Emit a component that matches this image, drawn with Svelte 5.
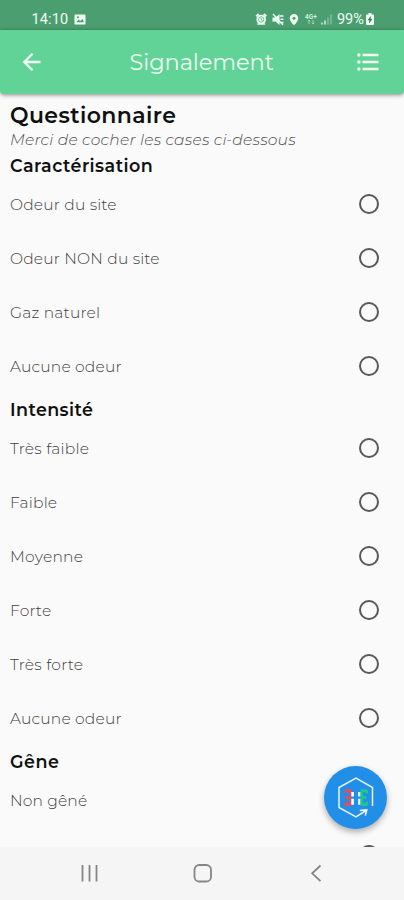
<script>
  const sections = [
    {
      title: 'Caractérisation', width: 143,
      options: [['Odeur du site', 106.5], ['Odeur NON du site', 149.5], ['Gaz naturel', 90], ['Aucune odeur', 111.5]]
    },
    {
      title: 'Intensité', width: 83,
      options: [['Très faible', 79], ['Faible', 47], ['Moyenne', 73], ['Forte', 41], ['Très forte', 73], ['Aucune odeur', 111.5]]
    },
    { title: 'Gêne', width: 49, options: [['Non gêné', 77], ['', 0]] }
  ];

  function track(node, width) {
    if (!width) return;
    const natural = node.getBoundingClientRect().width;
    node.style.letterSpacing = `${(width + 0.3 - natural) / node.textContent.length}px`;
  }
</script>

<div class="screen">
  <div class="status">
    <span class="time"><span use:track={36.5}>14:10</span></span>
    <svg class="photo" width="12" height="11" viewBox="0 0 12 12" preserveAspectRatio="none"><rect x=".5" y=".5" width="11" height="11" rx="1" fill="#effff4" /><path d="M2.3 9 4.5 6l1.7 1.7L8.5 5.500 10 9z" fill="#4b9e70" /><circle cx="4" cy="3.500" r="1" fill="#4b9e70" /></svg>
    <div class="right">
      <svg class="icons" width="82" height="18" viewBox="0 0 82 18" fill="none" stroke="#effff4">
        <path d="M1.200 6.300 3.700 4M11.300 6.300 8.800 4" stroke-width="2" />
        <circle cx="6.200" cy="9.500" r="4.800" fill="#effff4" stroke="none" />
        <circle cx="6.200" cy="9.500" r="2.700" stroke="#4b9e70" stroke-width=".7" />
        <path d="M6.200 8v1.800l1.300.7" stroke="#4b9e70" stroke-width=".8" />
        <path d="M2.200 14h8" stroke-width="1.400" />
        <path d="M17.500 7.500h3l4-3.500v11l-4-3.500h-3z" fill="#effff4" stroke="none" />
        <path d="m18 4 10 11M25 6h3.500M25.500 9.300h3M25.500 12.500h3" stroke-width="1.400" />
        <path d="M39 4a4.300 4.300 0 0 0-4.300 4.300C34.700 11.500 39 15.300 39 15.300s4.300-3.800 4.300-7A4.300 4.300 0 0 0 39 4z" fill="#effff4" stroke="none" />
        <circle cx="39" cy="8.300" r="1.500" fill="#4b9e70" stroke="none" />
        <text x="50" y="8.800" font-size="6.500" font-weight="600" fill="#d7f5e2" stroke="none">4G+</text>
        <path d="M54 14v-4m-1.300 1.300L54 10l1.300 1.300M58 10v4m-1.300-1.300L58 14l1.300-1.300" stroke="#a9d8bc" stroke-width=".9" />
        <path d="M67 14.500v-2M70 14.500v-4" stroke-width="1.700" opacity=".75" />
        <path d="M73 14.500v-7M76 14.500v-10" stroke-width="1.700" opacity=".3" />
      </svg>
      <span class="pct"><span use:track={26.5}>99%</span></span>
      <svg class="bat" width="8" height="12" viewBox="0 0 8 13" preserveAspectRatio="none"><path d="M2.500 0h3v1.500H7q1 0 1 1V12q0 1-1 1H1q-1 0-1-1V2.500q0-1 1-1h1.500z" fill="#effff4" /><path d="M4.600 4 2.300 7.600h1.500L3.400 10.500l2.300-3.700H4.200z" fill="#2f6c4a" stroke="#2f6c4a" stroke-width=".6" /></svg>
    </div>
  </div>

  <header>
    <svg class="back" width="20" height="20" viewBox="0 0 20 20"><path d="M18.500 10H3M10.500 1.800 2.300 10l8.200 8.200" fill="none" stroke="#effff4" stroke-width="2.300" /></svg>
    <div class="title"><span use:track={144}>Signalement</span></div>
    <svg class="list" width="22" height="18" viewBox="0 0 22 18" fill="none" stroke="#effff4" stroke-width="2.300"><path d="M5.500 2H21.500M5.500 9H21.500M5.500 16H21.500" /><g fill="#effff4" stroke="none"><circle cx="1.900" cy="2" r="1.700" /><circle cx="1.900" cy="9" r="1.700" /><circle cx="1.900" cy="16" r="1.700" /></g></svg>
  </header>

  <main>
    <h1><span use:track={166}>Questionnaire</span></h1>
    <p><span use:track={285.5}>Merci de cocher les cases ci-dessous</span></p>
    {#each sections as section}
      <h2><span use:track={section.width}>{section.title}</span></h2>
      {#each section.options as [label, width]}
        <div class="row">
          <span use:track={width}>{label}</span>
          <i class="radio"></i>
        </div>
      {/each}
    {/each}
    <div class="fab">
      <svg width="63" height="63" viewBox="0.500 0.500 63 63" fill="none">
        <path d="M49 40.500V22L32.500 12.500 15.500 22v20l17 9.300L42.500 45" stroke="#e6f5ff" stroke-width="1.500" />
        <path d="m36.300 45 6.900-.6-1.400 5.600" stroke="#fff" stroke-width="1.600" />
        <path d="M21 23.800h7v3.200h-7zM21.800 30.500h5.700v3h-5.700zM21 37.200h7v3.200h-7z" fill="#df4f62" />
        <path d="M20.800 25.500h2v2h-2zM20.800 36.500h2v2h-2zM25.800 26h2.500v5h-2.500zM25.800 33h2.500v5h-2.500z" fill="#df4f62" />
        <path d="M27.800 26.500h2.600v4.500h-2.600zM27.800 33.200h2.600v6h-2.600z" fill="#fff" />
        <path d="M34.500 26.500h2.600v4.500h-2.600zM34.500 33.200h2.600v6h-2.600z" fill="#d2f7f4" />
        <path d="M37.100 23.800h6.400l1.200 1.200v3h-2.400V27h-2.800v3.500h3.300v3h-3.300v3.700h2.800v-1.300h2.400v3.300l-1.200 1.200h-6.400z" fill="#20c58a" />
      </svg>
    </div>
  </main>

  <nav>
    <svg width="404" height="53" viewBox="0 0 404 53" fill="none" stroke="#858585" stroke-width="1.800">
      <path d="M82.500 18v16.500M89.500 18v16.500M96.500 18v16.500" />
      <rect x="194.500" y="18" width="16.500" height="16.500" rx="4.800" />
      <path d="m320.500 18.500-8.300 7.800 8.300 7.800" />
    </svg>
  </nav>
</div>

<style>
  :global(body) { margin: 0; background: #fafafa; }
  .screen {
    width: 404px; height: 900px; overflow: hidden;
    display: flex; flex-direction: column;
    font-family: Montserrat, Inter, sans-serif;
    color: #101010; background: #fafafa;
  }
  span { white-space: nowrap; }
  .status {
    flex: none; height: 30px; box-sizing: border-box;
    display: flex; align-items: center;
    padding: 8px 30px 0 31.500px;
    background: #4b9e70; color: #effff4;
    font-family: Roboto, sans-serif; font-size: 14.500px;
  }
  .time { width: 42px; }
  .right { margin-left: auto; display: flex; align-items: center; }
  .right svg { display: block; flex: none; }
  .pct { width: 29px; }
  header {
    flex: none; height: 64px; box-sizing: border-box; z-index: 1;
    display: flex; align-items: center; justify-content: space-between;
    padding: 0 25px 0 22px;
    background: #62d397; color: #effff4;
    border-radius: 0 0 4px 4px;
    box-shadow: 0 1px 4px rgba(0, 0, 0, .45);
  }
  .title { font-size: 22.500px; line-height: 30px; width: 144px; margin-left: 4px; }
  main { flex: none; position: relative; height: 753px; overflow: hidden; padding-left: 10px; }
  h1, h2, p { margin: 0; }
  h1 { font-size: 22px; font-weight: 600; line-height: 26px; height: 26px; padding: 9px 0 1px; }
  p { font-size: 15.500px; font-style: italic; font-weight: 300; line-height: 20px; color: #505050; height: 19px; }
  h2 { font-size: 17.500px; font-weight: 600; line-height: 33px; height: 28.200px; }
  .row {
    height: 54px; box-sizing: border-box; padding-right: 25px;
    display: flex; align-items: center; justify-content: space-between;
    font-size: 15.500px; font-weight: 300; color: #404040;
  }
  .radio { width: 20px; height: 20px; box-sizing: border-box; border: 2px solid #585858; border-radius: 50%; margin-left: auto; }
  .fab {
    position: absolute; left: 323.500px; top: 671.500px; width: 63px; height: 63px;
    border-radius: 50%; background: #218ee8;
    box-shadow: 0 3px 6px rgba(0, 0, 0, .32);
  }
  .fab svg { display: block; }
  nav { flex: none; height: 53px; background: #f5f5f5; }
  nav svg { display: block; }
</style>
